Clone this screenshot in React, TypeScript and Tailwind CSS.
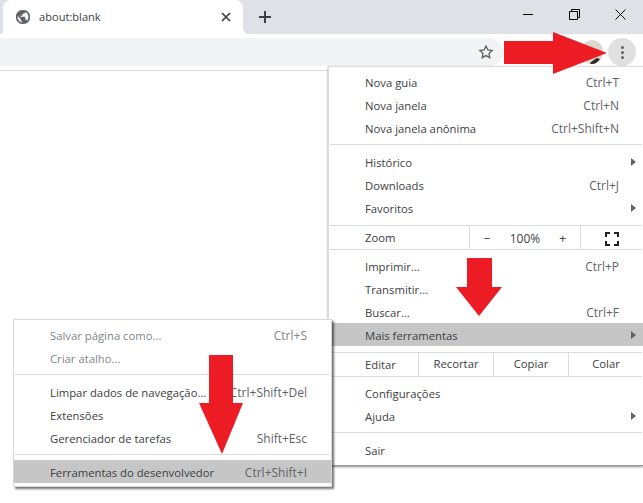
const font = "font-['Open_Sans','Liberation_Sans',sans-serif]";

type Item = { label: string; shortcut?: string; arrow?: boolean; active?: boolean; muted?: boolean };

function Row({ label, shortcut, arrow, active, muted }: Item) {
  return (
    <div className={`flex h-[23px] items-center pt-[3px] pl-[36px] pr-[24px] relative ${active ? 'bg-[#c6c6c6]' : ''}`}>
      <span className={`flex-1 text-[11.3px] ${muted ? 'text-[#80868b]' : 'text-[#3c4043]'}`}>{label}</span>
      {shortcut && <span className={muted ? 'text-[#80868b]' : 'text-[#5f6368]'}>{shortcut}</span>}
      {arrow && <span className="absolute right-[7px] top-[8px] w-0 h-0 border-y-[4px] border-y-transparent border-l-[5px] border-l-[#5f6368]" />}
    </div>
  );
}

function Sep({ className = 'my-[5px]' }: { className?: string }) {
  return <div className={`h-[1px] ml-[1px] mr-[1px] bg-[#dadce0] ${className}`} />;
}

export default function App() {
  return (
    <div className={`relative w-[643px] h-[503px] overflow-hidden bg-white text-[12px] ${font}`}>
      {/* tab strip */}
      <div className="h-[34px] flex">
        <div className="w-[3px] bg-[#dee1e6] rounded-br-[3px]" />
        <div className="w-[240px] bg-[#dee1e6]">
          <div className="h-full bg-white rounded-t-[8px] flex items-center pl-[13px] pr-[12px]">
            <svg width="14" height="14" viewBox="2 2 20 20" fill="#5f6368" stroke="#5f6368" strokeWidth="0.7">
              <path d="M12 2C6.48 2 2 6.48 2 12s4.48 10 10 10 10-4.48 10-10S17.52 2 12 2zm-1 17.93c-3.95-.49-7-3.85-7-7.93 0-.62.08-1.21.21-1.79L9 15v1c0 1.1.9 2 2 2v1.93zm6.9-2.54c-.26-.81-1-1.39-1.9-1.39h-1v-3c0-.55-.45-1-1-1H8v-2h2c.55 0 1-.45 1-1V7h2c1.1 0 2-.9 2-2v-.41c2.93 1.19 5 4.06 5 7.41 0 2.08-.8 3.97-2.1 5.39z" />
            </svg>
            <span className="flex-1 ml-[9px] text-[11.1px] text-[#3c4043]">about:blank</span>
            <svg width="10" height="10" viewBox="0 0 10 10" stroke="#3c4043" strokeWidth="1.7"><path d="M1 1l8 8M9 1l-8 8" /></svg>
          </div>
        </div>
        <div className="flex-1 bg-[#dee1e6] rounded-bl-[6px] flex items-center pl-[16px]">
          <svg width="12" height="12" viewBox="0 0 12 12" stroke="#3c4043" strokeWidth="2"><path d="M6 0v12M0 6h12" /></svg>
          <div className="flex-1" />
          <div className="flex items-center pb-[6px]">
            <div className="w-[46px] flex justify-center"><div className="w-[10px] h-[1px] bg-black" /></div>
            <div className="w-[46px] flex justify-center">
              <svg width="11" height="11" viewBox="0 0 11 11" fill="none" stroke="#000"><path d="M.5 2.5h8v8h-8zM2.5 2.5v-2h8v8h-2" /></svg>
            </div>
            <div className="w-[46px] flex justify-center">
              <svg width="11" height="11" viewBox="0 0 11 11" stroke="#000"><path d="M.5.5l10 10M10.5.5l-10 10" /></svg>
            </div>
          </div>
        </div>
      </div>
      {/* toolbar */}
      <div className="h-[37px] bg-white flex items-start border-b border-[#dadce0]">
        <div className="mt-[4px] w-[503px] h-[28px] bg-[#f1f3f4] rounded-r-[14px] flex items-center justify-end pr-[9px]">
          <svg width="16" height="16" viewBox="0 0 24 24" fill="none" stroke="#5f6368" strokeWidth="2"><path d="M12 3l2.8 5.9 6.4.8-4.7 4.4 1.2 6.4-5.7-3.1-5.7 3.1 1.2-6.4-4.7-4.4 6.4-.8z" /></svg>
        </div>
        <div className="flex-1" />
        <svg className="mt-[6px] mr-[5px]" width="22" height="24" viewBox="0 0 22 24">
          <ellipse cx="11" cy="12" rx="11" ry="12" fill="#dcd9cb" />
          <path d="M9 24c1-3 4-4 7-6l3 1c-2 3-5 5-8 5Z" fill="#2e2a26" />
        </svg>
        <div className="mt-[4px] mr-[7px] w-[28px] h-[28px] rounded-full bg-[#e0e0e0] flex flex-col items-center justify-center gap-[2px]">
          <span className="w-[3px] h-[3px] rounded-full bg-[#5f6368]" />
          <span className="w-[3px] h-[3px] rounded-full bg-[#5f6368]" />
          <span className="w-[3px] h-[3px] rounded-full bg-[#5f6368]" />
        </div>
      </div>

      {/* main menu */}
      <div className="absolute left-[328px] top-[66px] w-[315px] bg-white border-l border-t border-[#dadce0] border-b-[#9a9a9a] border-b shadow-[0_1px_2px_rgba(0,0,0,0.45)] pt-[3px] pb-[4px]">
        <Row label="Nova guia" shortcut="Ctrl+T" />
        <Row label="Nova janela" shortcut="Ctrl+N" />
        <Row label="Nova janela anônima" shortcut="Ctrl+Shift+N" />
        <Sep />
        <Row label="Histórico" arrow />
        <Row label="Downloads" shortcut="Ctrl+J" />
        <Row label="Favoritos" arrow />
        <Sep className="mt-[6px]" />
        <div className="flex h-[23px] items-center pt-[2px] text-[#3c4043]">
          <span className="w-[140px] pl-[36px] text-[11.3px]">Zoom</span>
          <div className="flex h-[25px] -mt-[2px] w-[112px] items-center justify-center gap-[19px] pt-[2px] border-l border-r border-[#dadce0]">
            <span>−</span><span>100%</span><span>+</span>
          </div>
          <div className="flex-1 flex justify-center pr-[1px]">
            <svg width="14" height="14" viewBox="0 0 14 14" fill="none" stroke="#202124" strokeWidth="2"><path d="M1 5V1h4M9 1h4v4M13 9v4H9M5 13H1V9" /></svg>
          </div>
        </div>
        <Sep className="mb-[4px]" />
        <Row label="Imprimir..." shortcut="Ctrl+P" />
        <Row label="Transmitir..." />
        <Row label="Buscar..." shortcut="Ctrl+F" />
        <Row label="Mais ferramentas" arrow active />
        <Sep className="mt-[6px]" />
        <div className="flex h-[23px] items-center text-[#3c4043] text-[11.3px]">
          <span className="w-[89px] pl-[36px] pt-[2px]">Editar</span>
          <div className="flex h-full flex-1 border-l border-[#dadce0]">
            <span className="w-[75px] flex items-center justify-center border-r border-[#dadce0]">Recortar</span>
            <span className="w-[75px] flex items-center justify-center border-r border-[#dadce0]">Copiar</span>
            <span className="flex-1 flex items-center justify-center">Colar</span>
          </div>
        </div>
        <Sep className="mb-[4px]" />
        <Row label="Configurações" />
        <Row label="Ajuda" arrow />
        <Sep />
        <Row label="Sair" />
      </div>

      {/* sub menu */}
      <div className="absolute left-[13px] top-[319px] w-[319px] bg-white border border-[#d8d8d8] shadow-[2px_2px_2px_rgba(0,0,0,0.55)] pt-[3px] pb-[3px]">
        <Row label="Salvar página como..." shortcut="Ctrl+S" muted />
        <Row label="Criar atalho..." muted />
        <Sep />
        <Row label="Limpar dados de navegação..." shortcut="Ctrl+Shift+Del" />
        <Row label="Extensões" />
        <Row label="Gerenciador de tarefas" shortcut="Shift+Esc" />
        <Sep />
        <Row label="Ferramentas do desenvolvedor" shortcut="Ctrl+Shift+I" active />
      </div>

      {/* red annotation arrows */}
      <svg className="absolute left-[503px] top-[32px]" width="105" height="42" viewBox="0 0 105 42">
        <path d="M1 9H50V0L104 21 50 42V32H1Z" fill="#ed1c24" />
      </svg>
      <svg className="absolute left-[456px] top-[258px]" width="46" height="58" viewBox="0 0 46 58">
        <path d="M11 0H36V29H46L23 58 0 29H11Z" fill="#ed1c24" />
      </svg>
      <svg className="absolute left-[199px] top-[355px]" width="44" height="99" viewBox="0 0 44 99">
        <path d="M10 0H34V48H44L23 99 0 48H10Z" fill="#ed1c24" />
      </svg>
    </div>
  );
}
